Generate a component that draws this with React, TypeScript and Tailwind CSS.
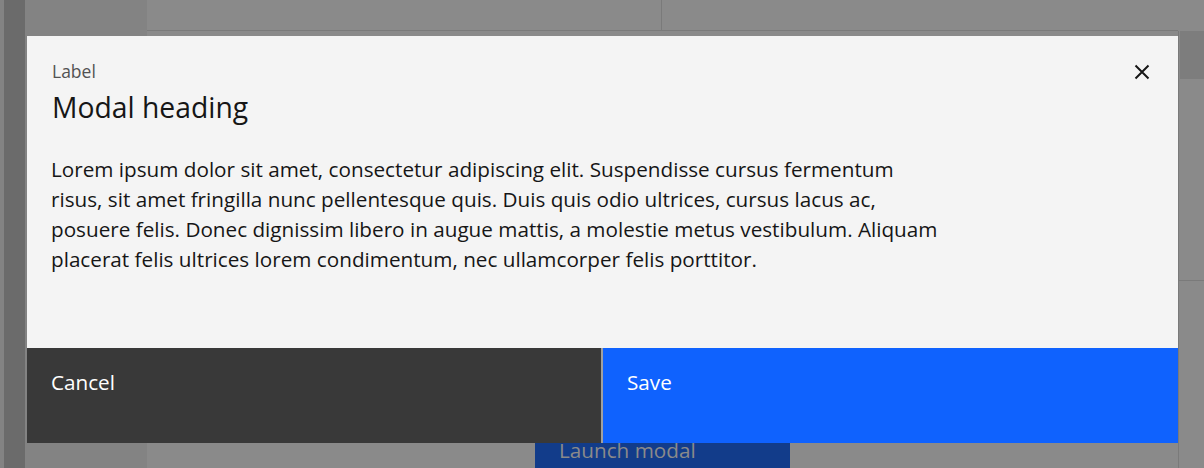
import React from "react";

const font = { fontFamily: '"Open Sans", "Noto Sans", Arial, sans-serif' };

function CloseIcon() {
  return (
    <svg width="16" height="16" viewBox="0 0 16 16" fill="none">
      <path d="M1.5 1.5 L14.5 14.5 M14.5 1.5 L1.5 14.5" stroke="#161616" strokeWidth="2" />
    </svg>
  );
}

export default function App() {
  return (
    <div className="relative w-[1204px] h-[468px] overflow-hidden flex bg-[#8a8a8a]" style={font}>
      {/* left sidebar */}
      <div className="w-[147px] h-full flex bg-[#838383]">
        <div className="w-[4px]" />
        <div className="w-[21px] h-full bg-[#6b6b6b]" />
      </div>
      {/* main background */}
      <div className="w-[1031px] h-full flex flex-col">
        <div className="h-[31px] flex border-b border-[#7a7a7a]">
          <div className="w-[515px] border-r border-[#7a7a7a] pl-[25px]">
            <div className="text-[20px] leading-[24px] mt-[-20px] text-[#161616]">White</div>
          </div>
          <div className="flex-1 pl-[27px]">
            <div className="text-[20px] leading-[24px] mt-[-20px] text-[#161616]">Modal</div>
          </div>
        </div>
        <div className="h-[412px]" />
        <div className="pl-[388px]">
          <div className="w-[255px] h-[30px] bg-[#123c8a] pl-[24px] text-[20.7px] leading-[14px] pt-[5px] text-[#8a8a8a]">
            Launch modal
          </div>
        </div>
      </div>
      {/* right strip */}
      <div className="w-[26px] h-full flex flex-col">
        <div className="h-[31px]" />
        <div className="flex-1 border-l border-[#7a7a7a] flex flex-col">
          <div className="h-[48px] ml-[1px] bg-[#7d7d7d]" />
          <div className="h-[202px] border-b border-[#7a7a7a]" />
        </div>
      </div>

      {/* modal */}
      <div className="absolute left-[27px] top-[36px] w-[1151px] h-[407px] bg-[#f4f4f4] flex flex-col">
        <button className="absolute right-0 top-0 w-[72px] h-[72px] flex items-center justify-center">
          <CloseIcon />
        </button>
        <div className="pt-[23px] pl-[25px]">
          <div className="text-[17.5px] leading-[24px] text-[#525252]">Label</div>
          <div className="mt-[3px] text-[28.3px] leading-[42px] text-[#161616]">Modal heading</div>
        </div>
        <div className="pl-[24px] pt-[26px] text-[20.7px] leading-[30px] text-[#161616] whitespace-nowrap">
          Lorem ipsum dolor sit amet, consectetur adipiscing elit. Suspendisse cursus fermentum
          <br />
          risus, sit amet fringilla nunc pellentesque quis. Duis quis odio ultrices, cursus lacus ac,
          <br />
          posuere felis. Donec dignissim libero in augue mattis, a molestie metus vestibulum. Aliquam
          <br />
          placerat felis ultrices lorem condimentum, nec ullamcorper felis porttitor.
        </div>
        <div className="mt-auto h-[95px] flex">
          <div className="w-[574px] h-full bg-[#393939] text-white text-[20.7px] leading-[27px] pt-[21px] pl-[24px]">
            Cancel
          </div>
          <div className="w-[2px] h-full bg-[#a0a0a0]" />
          <div className="flex-1 h-full bg-[#0f62fe] text-white text-[20.7px] leading-[27px] pt-[21px] pl-[24px]">
            Save
          </div>
        </div>
      </div>
    </div>
  );
}
